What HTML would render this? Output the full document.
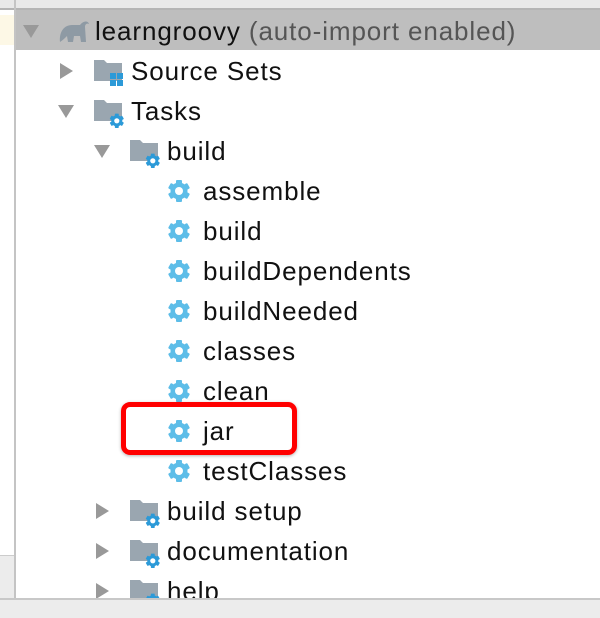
<!DOCTYPE html>
<html><head><style>
body{margin:0;width:600px;height:616px;overflow:hidden;background:#fff;position:relative;font-family:"Liberation Sans",sans-serif;font-size:26px;letter-spacing:0.9px}
.a{position:absolute}
.row{position:absolute;height:40px;line-height:40px;color:#111;white-space:nowrap}
.tri{position:absolute;width:0;height:0}
.r{border-top:8px solid transparent;border-bottom:8px solid transparent;border-left:13px solid #999}
.d{border-left:8px solid transparent;border-right:8px solid transparent;border-top:13px solid #999}
</style></head><body>
<svg width="0" height="0" style="position:absolute"><defs>
<g id="gear"><g fill="#5dbde8">
<circle cx="12" cy="12" r="8.5"/>
<rect x="9" y="1" width="6" height="22" rx="1"/>
<rect x="9" y="1" width="6" height="22" rx="1" transform="rotate(60 12 12)"/>
<rect x="9" y="1" width="6" height="22" rx="1" transform="rotate(120 12 12)"/>
</g><circle cx="12" cy="12" r="4" fill="#fff"/></g>
<g id="folder"><path d="M0 2h10l3 3h15v18H0z" fill="#9aa6b0"/></g>
<g id="sg"><g fill="#2c9ad8"><circle cx="12" cy="12" r="8.5"/>
<rect x="9" y="1" width="6" height="22" rx="1"/>
<rect x="9" y="1" width="6" height="22" rx="1" transform="rotate(60 12 12)"/>
<rect x="9" y="1" width="6" height="22" rx="1" transform="rotate(120 12 12)"/></g><circle cx="12" cy="12" r="4" fill="#fff"/></g>
</defs></svg>
<div class="a" style="left:0;top:0;width:600px;height:8px;background:#e8e8e8"></div>
<div class="a" style="left:0;top:8px;width:600px;height:2px;background:#b4b4b4"></div>
<div class="a" style="left:0;top:15px;width:14px;height:30px;background:#fdf8e6"></div>
<div class="a" style="left:0;top:555px;width:14px;height:45px;background:#ececec;border-top:1px solid #ccc"></div>
<div class="a" style="left:14px;top:0;width:2px;height:600px;background:#c4c4c4"></div>
<div class="a" style="left:16px;top:10px;width:584px;height:40px;background:#bebebe"></div>

<div class="tri d" style="left:23px;top:25px"></div>
<svg class="a" style="left:58px;top:18px" width="32" height="26"><path d="M2 24 C1 14 6 7 14 7 L22 7 C25 3 30 2 31 6 C29 5 27 6 27 9 L28 24 L23 24 L22 18 L16 18 L15 24 L10 24 L9 18 C7 20 5 22 2 24Z" fill="#8e9aa4"/></svg>
<div class="row" style="left:95px;top:11px">learngroovy <span style="color:#555">(auto-import enabled)</span></div>

<div class="tri r" style="left:60px;top:63px"></div>
<svg class="a" style="left:94px;top:58px" width="32" height="30"><use href="#folder"/><g fill="#2c9ad8"><rect x="16" y="15" width="6" height="6"/><rect x="23" y="15" width="6" height="6"/><rect x="16" y="22" width="6" height="6"/><rect x="23" y="22" width="6" height="6"/></g></svg>
<div class="row" style="left:131px;top:51px">Source Sets</div>

<div class="tri d" style="left:58px;top:105px"></div>
<svg class="a" style="left:94px;top:98px" width="32" height="32"><use href="#folder"/><g transform="translate(15 15) scale(0.65)"><use href="#sg"/></g></svg>
<div class="row" style="left:131px;top:91px">Tasks</div>

<div class="tri d" style="left:94px;top:145px"></div>
<svg class="a" style="left:130px;top:138px" width="32" height="32"><use href="#folder"/><g transform="translate(15 15) scale(0.65)"><use href="#sg"/></g></svg>
<div class="row" style="left:167px;top:131px">build</div>

<svg class="a" style="left:167px;top:179px" width="26" height="26"><use href="#gear"/></svg><div class="row" style="left:203px;top:171px">assemble</div>
<svg class="a" style="left:167px;top:219px" width="26" height="26"><use href="#gear"/></svg><div class="row" style="left:203px;top:211px">build</div>
<svg class="a" style="left:167px;top:259px" width="26" height="26"><use href="#gear"/></svg><div class="row" style="left:203px;top:251px">buildDependents</div>
<svg class="a" style="left:167px;top:299px" width="26" height="26"><use href="#gear"/></svg><div class="row" style="left:203px;top:291px">buildNeeded</div>
<svg class="a" style="left:167px;top:339px" width="26" height="26"><use href="#gear"/></svg><div class="row" style="left:203px;top:331px">classes</div>
<svg class="a" style="left:167px;top:379px" width="26" height="26"><use href="#gear"/></svg><div class="row" style="left:203px;top:371px">clean</div>
<svg class="a" style="left:167px;top:419px" width="26" height="26"><use href="#gear"/></svg><div class="row" style="left:203px;top:411px">jar</div>
<svg class="a" style="left:167px;top:459px" width="26" height="26"><use href="#gear"/></svg><div class="row" style="left:203px;top:451px">testClasses</div>

<div class="a" style="left:121px;top:402px;width:166px;height:43px;border:5px solid #f00;border-radius:9px;box-shadow:0 1px 3px rgba(0,0,0,.3)"></div>

<div class="tri r" style="left:96px;top:503px"></div>
<svg class="a" style="left:130px;top:498px" width="32" height="32"><use href="#folder"/><g transform="translate(15 15) scale(0.65)"><use href="#sg"/></g></svg>
<div class="row" style="left:167px;top:491px">build setup</div>
<div class="tri r" style="left:96px;top:543px"></div>
<svg class="a" style="left:130px;top:538px" width="32" height="32"><use href="#folder"/><g transform="translate(15 15) scale(0.65)"><use href="#sg"/></g></svg>
<div class="row" style="left:167px;top:531px">documentation</div>
<div class="tri r" style="left:96px;top:583px"></div>
<svg class="a" style="left:130px;top:578px" width="32" height="32"><use href="#folder"/><g transform="translate(15 15) scale(0.65)"><use href="#sg"/></g></svg>
<div class="row" style="left:167px;top:571px">help</div>
<div class="a" style="left:0;top:598px;width:600px;height:18px;background:#ececec;border-top:2px solid #c8c8c8"></div>
</body></html>
